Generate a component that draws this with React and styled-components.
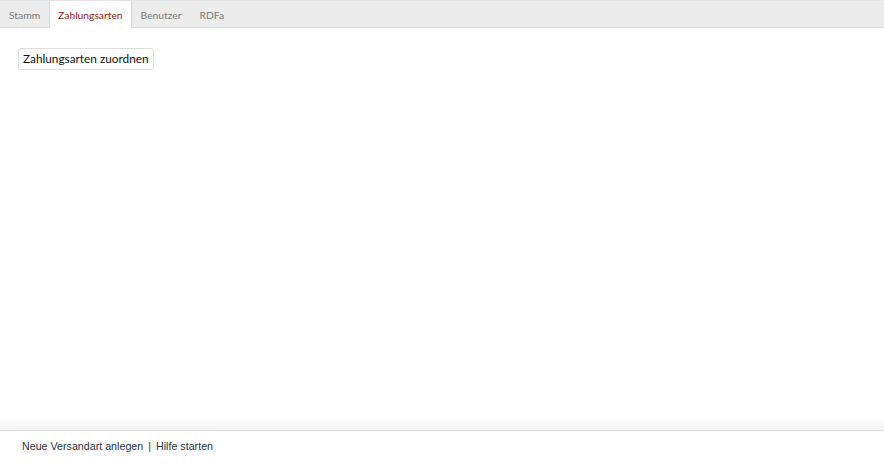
import React, { useState } from 'react';
import styled, { createGlobalStyle } from 'styled-components';

const GlobalStyle = createGlobalStyle`
  html, body {
    margin: 0;
    padding: 0;
    height: 100%;
    background: #fff;
  }
  #root {
    height: 100%;
  }
`;

const Page = styled.div`
  display: flex;
  flex-direction: column;
  height: 464px;
  font-family: Lato, "Liberation Sans", sans-serif;
`;

const TabBar = styled.div`
  display: flex;
  align-items: flex-end;
  height: 28px;
  padding-left: 0;
  background-color: #ececec;
  border-top: 1px solid #e4e4e4;
  border-bottom: 1px solid #dcdcdc;
  box-sizing: border-box;
`;

const Tab = styled.button`
  height: 27px;
  margin-bottom: -1px;
  padding: 0 8px;
  border: 1px solid ${(p) => (p.$active ? '#dcdcdc' : 'transparent')};
  border-bottom: none;
  border-top: none;
  background-color: ${(p) => (p.$active ? '#fff' : 'transparent')};
  color: ${(p) => (p.$active ? '#8b1c1c' : '#7a7a7a')};
  font-family: Lato, "Liberation Sans", sans-serif;
  font-size: 10.3px;
  cursor: pointer;
`;

const Content = styled.div`
  flex: 1;
  padding: 19px 18px;
`;

const ActionButton = styled.button`
  height: 22px;
  padding: 0 4px;
  background-color: #fff;
  border: 1px solid #dedede;
  border-radius: 3px;
  color: #111;
  font-family: Lato, "Liberation Sans", sans-serif;
  font-size: 11.8px;
  cursor: pointer;
`;

const Footer = styled.div`
  position: relative;
  height: 34px;
  padding: 9px 22px 0;
  box-sizing: border-box;
  border-top: 1px solid #dcdcdc;
  font-family: "Liberation Sans", Arial, sans-serif;
  font-size: 10.7px;
  color: #2c3440;

  &::before {
    content: '';
    position: absolute;
    left: 0;
    right: 0;
    top: -16px;
    height: 15px;
    background: linear-gradient(to bottom, rgba(245, 245, 245, 0), #f3f3f3);
  }
`;

const FooterLink = styled.a`
  color: inherit;
  text-decoration: none;
  cursor: pointer;
`;

const Sep = styled.span`
  margin: 0 5px;
`;

const tabs = ['Stamm', 'Zahlungsarten', 'Benutzer', 'RDFa'];

export default function App() {
  const [active, setActive] = useState('Zahlungsarten');

  return (
    <Page>
      <GlobalStyle />
      <TabBar>
        {tabs.map((t) => (
          <Tab key={t} $active={t === active} onClick={() => setActive(t)}>
            {t}
          </Tab>
        ))}
      </TabBar>
      <Content>
        <ActionButton>Zahlungsarten zuordnen</ActionButton>
      </Content>
      <Footer>
        <FooterLink>Neue Versandart anlegen</FooterLink>
        <Sep>|</Sep>
        <FooterLink>Hilfe starten</FooterLink>
      </Footer>
    </Page>
  );
}
